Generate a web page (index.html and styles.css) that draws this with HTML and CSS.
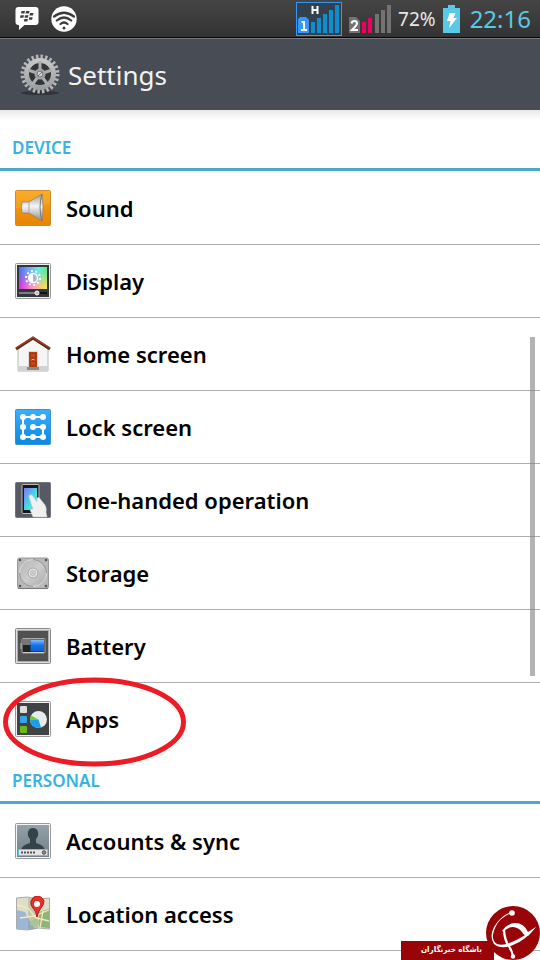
FILE: index.html
```html
<!DOCTYPE html>
<html lang="en">
<head>
<meta charset="utf-8">
<meta name="viewport" content="width=device-width, initial-scale=1">
<title>Settings</title>
<link rel="stylesheet" href="styles.css">
</head>
<body>
<div class="status">
  <div class="status-group notices">
    <svg width="24" height="24" viewBox="0 0 24 24" aria-hidden="true">
      <path fill="#fff" d="M3.500 0h17a3 3 0 0 1 3 3v12a3 3 0 0 1-3 3H9.500L4 23V18H3.500a3 3 0 0 1-3-3V3a3 3 0 0 1 3-3z"/>
      <path fill="#3f3f3f" d="M6.500 4h3.500l-.6 2.600H6zM11 4h3.500l-.6 2.600h-3.400zM5.500 8.200H9l-.6 2.600H5zM10 8.200h3.500l-.6 2.600H9.500zM15 6h3.500l-.6 2.600h-3.400zM14.200 10.200h3.500l-.6 2.600h-3.400zM9.400 12h3.500l-.6 2.600H8.900z"/>
    </svg>
    <svg width="26" height="26" viewBox="0 0 26 26" aria-hidden="true">
      <circle cx="13" cy="13" r="12.700" fill="#fff"/>
      <g fill="none" stroke="#3c3c3c" stroke-width="2.200" stroke-linecap="round"><path d="M3 10.500Q13 3 23 10.500M5.800 14.500Q13 8.500 20.200 14.500M9.500 18Q13 15 16.500 18"/></g>
      <circle cx="13" cy="22" r="1.500" fill="#3c3c3c"/>
    </svg>
  </div>
  <div class="status-group">
    <svg width="46" height="34" viewBox="0 0 46 34" role="img" aria-label="SIM 1 signal">
      <rect x=".5" y=".5" width="45" height="33" fill="#33414f" stroke="#3598f5"/>
      <path fill="#0d8ed0" d="M15 20h4v11h-4zM21 16h4v15h-4zM27 12h4v19h-4zM33 8h4v23h-4zM39 3h4v28h-4z"/>
      <path fill="#3598ff" d="M2 17l2-2h6l3 3v13H2z"/>
      <path fill="none" stroke="#fff" stroke-width="2" d="M16.500 4v8M21.500 4v8M16.500 8h5M5.500 20H8v7.500M5 28h6"/>
    </svg>
    <svg class="sim-two" width="42" height="28" viewBox="0 0 42 28" role="img" aria-label="SIM 2 signal">
      <path fill="#737373" d="M0 12h7l4 4v12H0zM26 9h4v19h-4zM32 5h4v23h-4zM38 0h4v28h-4z"/>
      <path fill="#ed0062" d="M13 17h4v11h-4zM19 13h4v15h-4z"/>
      <path fill="none" stroke="#fff" stroke-width="2" d="M2.500 18.500Q3 16 5.500 16q2.500 0 2.500 2.500 0 1.500-5 6.500h6"/>
    </svg>
    <span class="percent">72%</span>
    <svg class="charge" width="17" height="28" viewBox="0 0 17 28" aria-hidden="true">
      <path fill="#5bc8e5" d="M5 0h7v3h5v25H0V3h5z"/><path fill="#fff" d="M6.500 8h6L10.500 13h3.500L6 23l1.500-7H4z"/>
    </svg>
    <time class="clock">22:16</time>
  </div>
</div>
<header class="title-bar">
  <svg width="40" height="42" viewBox="0 0 40 42" aria-hidden="true">
    <defs><linearGradient id="steel" x2="0" y2="1"><stop stop-color="#c4c6c7"/><stop offset="1" stop-color="#9c9ea0"/></linearGradient></defs>
    <ellipse cx="20" cy="39" rx="19" ry="2" fill="#30333a"/>
    <circle cx="20" cy="20" r="17.500" fill="none" stroke="#b5b7b8" stroke-width="4" stroke-dasharray="2.400 2.182"/>
    <circle cx="20" cy="20" r="13.500" fill="#343535" stroke="url(#steel)" stroke-width="5"/>
    <path d="M20 20V7M20 20l12-4M20 20l8 11M20 20l-8 11M20 20L8 16" stroke="#abadaf" stroke-width="3"/>
    <circle cx="20" cy="20" r="5.500" fill="#a4a6a8"/><circle cx="20" cy="20" r="3" fill="#d0d2d2" stroke="#777"/><path d="M18 22l4-4" stroke="#777"/>
  </svg>
  <h1>Settings</h1>
</header>
<main>
  <section>
    <h2>DEVICE</h2>
    <ul>
      <li><a href="#sound"><svg class="icon" viewBox="0 0 36 36" aria-hidden="true">
        <defs><linearGradient id="orange" x2="0" y2="1"><stop stop-color="#f9a51d"/><stop offset="1" stop-color="#e98200"/></linearGradient><linearGradient id="cone" x2="0" y2="1"><stop stop-color="#999"/><stop offset=".45" stop-color="#f6f6f6"/><stop offset="1" stop-color="#8b8b8b"/></linearGradient></defs>
        <rect x=".5" y=".5" width="35" height="35" rx="1" fill="url(#orange)" stroke="#cf8c2d"/><path d="M1 18Q20 20 35 13V1H1z" fill="#ffc04a" opacity=".25"/>
        <path d="M7 12h7L27 4q2 14 0 27L14 23H7q-1-5 0-11z" fill="url(#cone)" stroke="#8f7b60" stroke-width=".7"/><path d="M27 4q-4 13 0 27" fill="none" stroke="#777"/><path d="M14 12v11" stroke="#aaa"/>
      </svg><span>Sound</span></a></li>
      <li><a href="#display"><svg class="icon" viewBox="0 0 36 36" aria-hidden="true">
        <defs><linearGradient id="hue"><stop stop-color="#496ff0"/><stop offset=".35" stop-color="#79a4ff"/><stop offset=".7" stop-color="#66eedc"/><stop offset="1" stop-color="#65e58c"/></linearGradient><linearGradient id="warm"><stop stop-color="#d52de8"/><stop offset=".5" stop-color="#ff9bc2"/><stop offset="1" stop-color="#f0e94b"/></linearGradient><linearGradient id="fade" x2="0" y2="1"><stop offset=".2" stop-color="#000"/><stop offset=".9" stop-color="#fff"/></linearGradient><mask id="low"><path d="M4 4h28v22H4z" fill="url(#fade)"/></mask></defs>
        <rect x=".5" y=".5" width="35" height="35" rx="1" fill="#eee" stroke="#999"/><path d="M2 2h32v32H2z" fill="#34373a"/><path d="M4 4h28v22H4z" fill="url(#hue)"/><path d="M4 4h28v22H4z" fill="url(#warm)" mask="url(#low)"/>
        <circle cx="18" cy="15" r="7" fill="none" stroke="#fff" stroke-width="2" stroke-dasharray="1.800 2.600"/><circle cx="18" cy="15" r="4.500" fill="#a8b6df" stroke="#fff" stroke-width="1.300"/><path d="M18 11a4 4 0 0 0 0 8z" fill="#fff"/>
        <path d="M4 30h28" stroke="#111" stroke-width="2"/><path d="M4 30h17" stroke="#eee"/><circle cx="22" cy="30" r="2" fill="#bbb" stroke="#fff"/>
      </svg><span>Display</span></a></li>
      <li><a href="#home"><svg class="icon" viewBox="0 0 36 36" aria-hidden="true">
        <path d="M3 13L18 2l15 11v22H3z" fill="#f5f5f5" stroke="#b8b8b8"/><path d="M3.500 30h29v4.500h-29z" fill="#d2d2d2"/><path d="M1 13L18 2l17 11" fill="none" stroke="#5e2716" stroke-width="3"/><path d="M1 12L18 1.500 35 12" fill="none" stroke="#a4462b" stroke-width="1.200"/>
        <path d="M13 15h10v17H13z" fill="#ddd"/><path d="M12 31h12v3H12z" fill="#8a8a8a"/><path d="M14 16h8v15h-8z" fill="#b63e14"/><path d="M15.500 17.500h5v4h-5zM15.500 25.500h5v4h-5z" fill="#c04a20" stroke="#962f0b" stroke-width=".6"/><path d="M16.500 24q1.500-1.500 3 0" fill="none" stroke="#e9b29a"/>
      </svg><span>Home screen</span></a></li>
      <li><a href="#lock"><svg class="icon" viewBox="0 0 36 36" aria-hidden="true">
        <defs><linearGradient id="sky" x2="0" y2="1"><stop stop-color="#3caeff"/><stop offset="1" stop-color="#0789e2"/></linearGradient></defs>
        <rect x=".5" y=".5" width="35" height="35" rx="1" fill="url(#sky)" stroke="#3c92cf"/><path d="M28 8H8v20h20V18H18" fill="none" stroke="#fff" stroke-width="2"/>
        <g fill="#fff"><circle cx="8" cy="8" r="3"/><circle cx="18" cy="8" r="3"/><circle cx="28" cy="8" r="3"/><circle cx="8" cy="18" r="3"/><circle cx="18" cy="18" r="3"/><circle cx="28" cy="18" r="3"/><circle cx="8" cy="28" r="3"/><circle cx="18" cy="28" r="3"/><circle cx="28" cy="28" r="3"/></g>
      </svg><span>Lock screen</span></a></li>
      <li><a href="#one-handed"><svg class="icon" viewBox="0 0 36 36" aria-hidden="true">
        <defs><linearGradient id="phone" x2="1" y2="1"><stop stop-color="#7a78ea"/><stop offset=".3" stop-color="#65a8f7"/><stop offset=".6" stop-color="#42e6da"/><stop offset="1" stop-color="#c5a0eb"/></linearGradient></defs>
        <rect x=".5" y=".5" width="35" height="35" rx="1" fill="#575a64" stroke="#73757d"/><rect x="7" y="2.500" width="17" height="29" rx="1" fill="#16191b" stroke="#bbb"/><path d="M9 6h13v22H9z" fill="url(#phone)"/>
        <path d="M14 15q0-3 3-2l5 7V16q2-2 4 2l4 5q2 3 1 7l1 5H18l-2-5-1-2 3-1z" fill="#f0f0ee" stroke="#ccc" stroke-width=".5"/>
      </svg><span>One-handed operation</span></a></li>
      <li><a href="#storage"><svg class="icon" viewBox="0 0 36 36" aria-hidden="true">
        <defs><linearGradient id="disk" x2="1" y2="1"><stop stop-color="#b4b4b4"/><stop offset=".5" stop-color="#ccc"/><stop offset="1" stop-color="#aaa"/></linearGradient></defs>
        <rect x="2.500" y="3" width="31" height="30.500" rx="2" fill="#b9b9b9" stroke="#999"/><path d="M3 33.500h30" stroke="#777"/><circle cx="18" cy="18" r="13.500" fill="url(#disk)" stroke="#ddd"/><path d="M18 31.500a13.500 13.500 0 0 1-13.500-13.500M18 4.500A13.500 13.500 0 0 1 31.500 18" fill="none" stroke="#8d8d8d"/><circle cx="18" cy="18" r="4" fill="#c8c8c8" stroke="#eaeaea"/><circle cx="18" cy="18" r="5" fill="none" stroke="#999" stroke-width=".7"/>
        <g fill="#555"><circle cx="5" cy="5" r="1.300"/><circle cx="31" cy="5" r="1.300"/><circle cx="5" cy="31" r="1.300"/><circle cx="31" cy="31" r="1.300"/></g>
      </svg><span>Storage</span></a></li>
      <li><a href="#battery"><svg class="icon" viewBox="0 0 36 36" aria-hidden="true">
        <defs><linearGradient id="cell" x2="0" y2="1"><stop stop-color="#8dc2ff"/><stop offset=".35" stop-color="#3688ee"/><stop offset=".5" stop-color="#0874f7"/><stop offset="1" stop-color="#1460be"/></linearGradient></defs>
        <rect x=".5" y=".5" width="35" height="35" rx="1" fill="#ddd" stroke="#888"/><path d="M2.500 2.500h31v31h-31z" fill="#515151" stroke="#aaa"/><path d="M4 4h28v28H4z" fill="#515151"/><rect x="5" y="15" width="3" height="6" fill="#888"/><rect x="7" y="10.500" width="23" height="14.500" rx="1" fill="#222" stroke="#aaa"/><path d="M7.500 11h8v6h-8z" fill="#777"/><path d="M15.500 11.500H29v12H15.500z" fill="url(#cell)"/><path d="M8 24.500h21" stroke="#ccc"/>
      </svg><span>Battery</span></a></li>
      <li class="marked"><a href="#apps"><svg class="icon" viewBox="0 0 36 36" aria-hidden="true">
        <rect x=".5" y=".5" width="35" height="35" rx="1" fill="#eee" stroke="#999"/><path d="M2 2h32v32H2z" fill="#404346"/><rect x="5" y="5" width="7" height="7" rx="1" fill="#ddd"/><rect x="5" y="15" width="7" height="7" rx="1" fill="#36a3ed"/><rect x="5" y="25" width="7" height="7" rx="1" fill="#6dba16"/>
        <circle cx="23.500" cy="18.500" r="8.500" fill="#e8ebee"/><path d="M23.500 18.500L16 14.500a8.500 8.500 0 0 0-1 4z" fill="#77c922"/><path d="M23.500 18.500H15a8.500 8.500 0 0 0 11 8z" fill="#199fef"/>
      </svg><span>Apps</span></a>
      <svg class="ring" width="184" height="90" viewBox="0 0 184 90" aria-hidden="true"><ellipse cx="91.500" cy="45" rx="89" ry="42" fill="none" stroke="#ed1c24" stroke-width="5"/></svg></li>
    </ul>
  </section>
  <section>
    <h2>PERSONAL</h2>
    <ul>
      <li><a href="#accounts"><svg class="icon" viewBox="0 0 36 36" aria-hidden="true">
        <defs><linearGradient id="slate" x2="0" y2="1"><stop stop-color="#94a1a9"/><stop offset="1" stop-color="#728089"/></linearGradient></defs>
        <rect x=".5" y=".5" width="35" height="35" rx="1" fill="#f5f5f5" stroke="#999"/><path d="M2 2h32v32H2z" fill="url(#slate)"/><path d="M6 27q1-5 9-7v-4q-3-3-2-7 1-4 5-4t5 4q1 4-2 7v4q8 2 9 7z" fill="#34434b"/><path d="M3.500 26.500h29v6h-29z" fill="#e5e5e5" stroke="#5cc4e4"/><path d="M6 29.500h14" stroke="#555" stroke-width="2" stroke-dasharray="2 1"/><circle cx="29" cy="29.500" r="1.800" fill="#888" stroke="#555"/>
      </svg><span>Accounts &amp; sync</span></a></li>
      <li><a href="#location"><svg class="icon" viewBox="0 0 36 36" aria-hidden="true">
        <path d="M1.500 2l11-1 11 2 11-1v31l-11-1-11 2-11-1z" fill="#dedfca" stroke="#aaa"/><path d="M2 14l8 2 4 8 6 9-8 1-10-1z" fill="#9bb7d8"/><path d="M13 2v32l10.500-2V3z" fill="#7e8f78" opacity=".3"/><path d="M24 16l10-3v19l-10-1z" fill="#8bb57c"/><path d="M16 25l6-3 3 5-4 4-6-2z" fill="#a5c691"/><path d="M2 9l11 3 8 10 13 3M5 22l14-2 15-6M25 32l3-17" fill="none" stroke="#f9e9b3" stroke-width="1.300"/>
        <path d="M22 21q-1-6-4-9-3-3-2-7 2-5 6-5 5 0 7 5 0 4-3 7-3 4-4 9z" fill="#e33328" stroke="#b71c18"/><circle cx="22" cy="8" r="3" fill="#fff"/>
      </svg><span>Location access</span></a></li>
    </ul>
  </section>
</main>
<div class="scrollbar"></div>
<div class="watermark" lang="fa" dir="rtl">
  <svg width="54" height="54" viewBox="0 0 54 54" aria-hidden="true">
    <circle cx="27" cy="27" r="27" fill="#980407"/>
    <g fill="#fff"><circle cx="26" cy="7" r="2.800"/><circle cx="27" cy="50.500" r="2.200"/>
    <path d="M25 7Q13 12 9 22Q4 34 11 38Q17 40 26 36Q38 31 50 21Q40 34 27 39Q15 44 8 38Q3 30 8 21Q14 10 25 6z"/>
    <path d="M16 25Q22 17 29 17Q38 17 42 26L50 21L42 30Q38 30 36 26Q32 21 26 21Q20 22 18 26z"/>
    <path d="M17 24Q17 34 22 41Q25 45 26 51L28 51Q27 44 24 40Q20 34 19 24z"/></g>
  </svg>
  <span>باشگاه خبرنگاران</span>
</div>
</body>
</html>
```
FILE: styles.css
```css
* { box-sizing: border-box; }
body {
  position: relative;
  min-height: 100vh;
  margin: 0;
  overflow: hidden;
  background: #fff;
  color: #000;
  font-family: "Noto Sans", "Open Sans", sans-serif;
}
svg { display: block; flex: none; }
.status {
  display: flex;
  align-items: center;
  justify-content: space-between;
  height: 38px;
  padding: 0 9px 0 15px;
  border-bottom: 1px solid #050505;
  background: linear-gradient(#454545, #333);
}
.status-group { display: flex; align-items: center; }
.notices { gap: 12px; }
.sim-two { margin-left: 7px; }
.percent { margin-left: 7px; color: #e8e8e8; font-size: 19px; }
.charge { margin-left: 7px; }
.clock { margin-left: 10px; color: #5bc8e5; font-size: 24px; }
.title-bar {
  display: flex;
  align-items: center;
  gap: 8px;
  height: 72px;
  padding: 0 20px;
  border-top: 1px solid #777b80;
  background: #484c54;
  color: #f2f2f2;
}
h1 { margin: 0; font-size: 26px; font-weight: 400; }
main { padding-top: 13px; background: linear-gradient(#e8e8e8, #fff 10px); }
h2 {
  height: 48px;
  margin: 0;
  padding: 0 12px;
  border-bottom: 3px solid #4ba9c9;
  color: #37b2e1;
  font-size: 17px;
  font-weight: 600;
  line-height: 50px;
}
ul { margin: 0; padding: 1px 0 0; list-style: none; }
li { position: relative; border-bottom: 1px solid #adadb3; }
.marked { border-color: transparent; }
li a {
  display: flex;
  align-items: center;
  gap: 15px;
  height: 72px;
  padding: 0 15px;
  color: inherit;
  font-size: 22px;
  font-weight: 600;
  text-decoration: none;
}
.icon { width: 36px; height: 36px; }
.ring { position: absolute; top: -6px; left: 3px; z-index: 1; }
.scrollbar {
  position: absolute;
  top: 337px;
  right: 5px;
  width: 5px;
  height: 339px;
  background: rgba(128, 128, 128, 0.6);
}
.watermark {
  position: absolute;
  right: 0;
  bottom: 0;
  display: flex;
  align-items: flex-end;
}
.watermark span {
  height: 19px;
  margin-right: -8px;
  padding: 0 12px 0 20px;
  background: #980407;
  color: #fff;
  font-family: "DejaVu Sans Condensed", "DejaVu Sans", sans-serif;
  font-size: 8px;
  font-weight: 700;
  line-height: 18px;
}
.watermark svg { position: relative; z-index: 1; }
```
